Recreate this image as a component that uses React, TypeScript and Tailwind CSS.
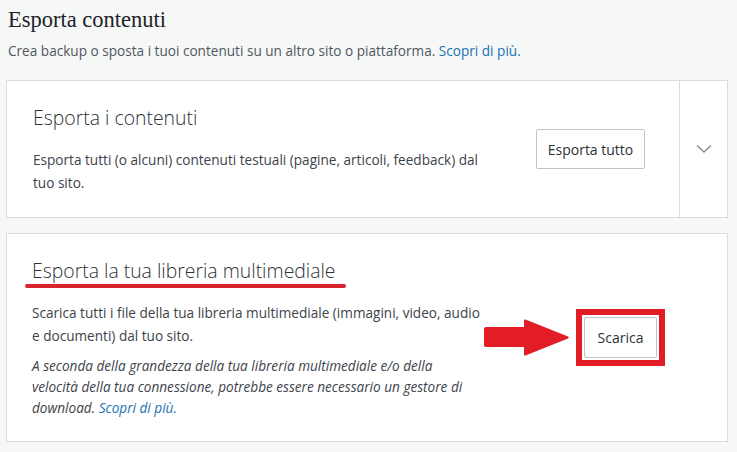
const body = { fontFamily: '"Open Sans", "Noto Sans", sans-serif' }

const RedArrow = () => (
    <svg width="86" height="38" viewBox="0 0 86 38" className="shrink-0">
        <path
            d="M2 8 H40 V1.5 Q40 0 41.5 0.6 L84 17.5 Q85.5 18.5 84 19.5 L41.5 36.4 Q40 37 40 35.5 V28 H2 Q0 28 0 26 V10 Q0 8 2 8 Z"
            fill="#e31d25"
        />
    </svg>
)

const Chevron = () => (
    <svg width="16" height="10" viewBox="0 0 16 10">
        <path d="M1 1.5 L8 8 L15 1.5" fill="none" stroke="#8c8f94" strokeWidth="1.4" />
    </svg>
)

export default function App() {
    return (
        <div className="min-h-[452px] w-[737px] bg-[#f6f7f7] text-[#2c3338]" style={body}>
            <div className="px-[8px] pt-[3px]">
                <h1 className="text-[22.5px] leading-[34px] text-[#1d2327]" style={{ fontFamily: '"Liberation Serif", "DejaVu Serif", serif' }}>
                    Esporta contenuti
                </h1>
                <p className="mt-[4px] text-[13.6px] leading-[20px] text-[#50575e]">
                    Crea backup o sposta i tuoi contenuti su un altro sito o piattaforma.{' '}
                    <a className="text-[#2271b1]">Scopri di più.</a>
                </p>
            </div>

            <div className="ml-[6px] mt-[19px] flex h-[138px] w-[722px] border border-[#dcdcde] bg-white">
                <div className="flex flex-1 items-center pl-[26px] pr-[34px]">
                    <div className="w-[452px] shrink-0">
                        <h2 className="text-[19.4px] font-light leading-[28px] text-[#2c3338]">Esporta i contenuti</h2>
                        <p className="mt-[16px] text-[13.6px] leading-[23px] text-[#3c434a]">
                            Esporta tutti (o alcuni) contenuti testuali (pagine, articoli, feedback) dal tuo sito.
                        </p>
                    </div>
                    <div className="ml-auto">
                        <button className="h-[40px] w-[109px] rounded-[2px] border border-[#c3c4c7] bg-white text-[14px] text-[#2c3338]">
                            Esporta tutto
                        </button>
                    </div>
                </div>
                <div className="flex w-[48px] items-center justify-center border-l border-[#dcdcde]">
                    <Chevron />
                </div>
            </div>

            <div className="ml-[6px] mt-[15px] flex h-[209px] w-[722px] items-center border border-[#dcdcde] bg-white pl-[25px]">
                <div className="w-[452px] shrink-0">
                    <h2 className="relative inline-block text-[19.4px] font-light leading-[28px] text-[#2c3338]">
                        Esporta la tua libreria multimediale
                        <span className="absolute -left-[7px] -right-[10px] top-[27px] h-[4px] rounded-full bg-[#d9232d]" />
                    </h2>
                    <p className="mt-[16px] text-[13.6px] leading-[23px] text-[#3c434a]">
                        Scarica tutti i file della tua libreria multimediale (immagini, video, audio e documenti) dal tuo sito.
                    </p>
                    <p className="mt-[8px] w-[444px] text-[13.6px] italic leading-[21px] text-[#3c434a]">
                        A seconda della grandezza della tua libreria multimediale e/o della velocità della tua connessione, potrebbe essere necessario un gestore di download.{' '}
                        <a className="text-[#2271b1]">Scopri di più.</a>
                    </p>
                </div>
                <div className="flex items-center">
                    <RedArrow />
                    <div className="ml-[6px] border-[6px] border-[#e31d25] p-[2px]">
                        <button className="h-[41px] w-[73px] rounded-[2px] border border-[#c3c4c7] bg-white text-[14px] text-[#2c3338]">
                            Scarica
                        </button>
                    </div>
                </div>
            </div>
        </div>
    )
}
